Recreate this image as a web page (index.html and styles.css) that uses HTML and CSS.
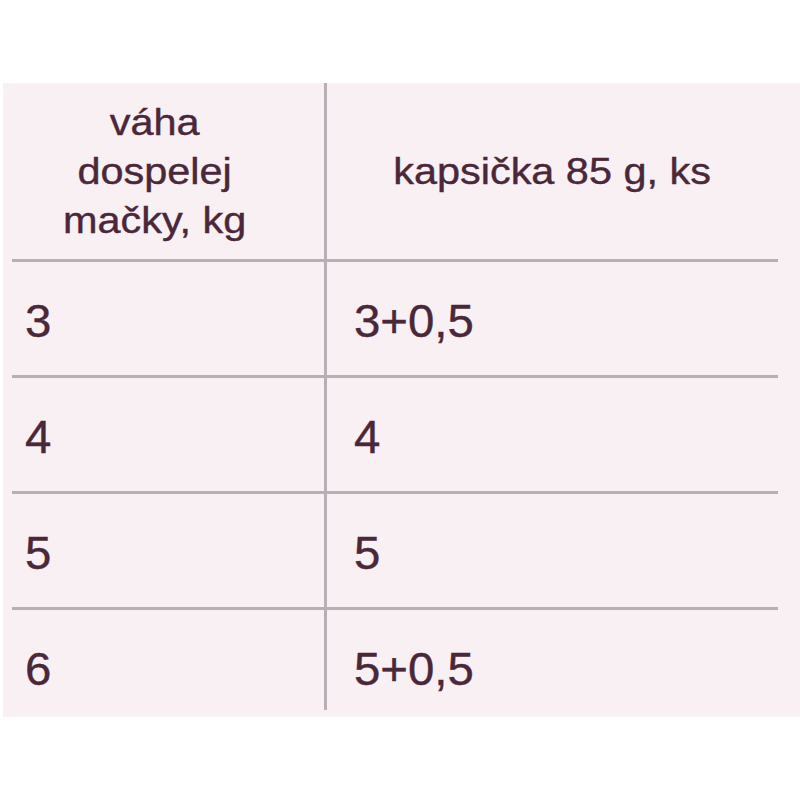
FILE: index.html
```html
<!DOCTYPE html>
<html lang="sk">
<head>
<meta charset="utf-8">
<title>Dávkovanie</title>
<link rel="stylesheet" href="styles.css">
</head>
<body>
<div class="table">
  <div class="row head">
    <div class="cell left"><span class="t ht">váha<br>dospelej<br>mačky, kg</span></div>
    <div class="cell right"><span class="t ht">kapsička 85 g, ks</span></div>
  </div>
  <div class="rule"></div>
  <div class="row">
    <div class="cell left"><span class="t num">3</span></div>
    <div class="cell right"><span class="t num">3+0,5</span></div>
  </div>
  <div class="rule"></div>
  <div class="row">
    <div class="cell left"><span class="t num">4</span></div>
    <div class="cell right"><span class="t num">4</span></div>
  </div>
  <div class="rule"></div>
  <div class="row">
    <div class="cell left"><span class="t num">5</span></div>
    <div class="cell right"><span class="t num">5</span></div>
  </div>
  <div class="rule"></div>
  <div class="row last">
    <div class="cell left"><span class="t num">6</span></div>
    <div class="cell right"><span class="t num">5+0,5</span></div>
  </div>
</div>
</body>
</html>
```

FILE: styles.css
```css
html, body {
  margin: 0;
  padding: 0;
  background: #ffffff;
}
body {
  font-family: "Liberation Sans", Arial, sans-serif;
  color: #4a2739;
}
.table {
  margin: 83px 0 0 3px;
  width: 797px;
  background: #f9f0f3;
}
.row {
  display: flex;
  height: 113px;
}
.row.head {
  height: 176px;
}
.row.last {
  height: 107px;
}
.cell {
  display: flex;
  align-items: center;
  box-sizing: border-box;
}
.cell.left {
  width: 324px;
  border-right: 3px solid #b9adb6;
  padding-left: 22px;
}
.cell.right {
  flex: 1;
  padding-left: 27px;
}
.row .cell {
  padding-top: 5px;
}
.row.last .cell {
  height: 100px;
  align-self: flex-start;
  padding-top: 18px;
}
.head .cell {
  justify-content: center;
  text-align: center;
  padding-top: 0;
}
.head .cell.left {
  padding-left: 0;
  padding-right: 18px;
}
.head .cell.right {
  padding-left: 0;
  padding-right: 22px;
}
.t {
  display: inline-block;
  -webkit-text-stroke: 0.4px #4a2739;
}
.ht {
  font-size: 36px;
  line-height: 49px;
  transform: scaleX(1.15);
  transform-origin: center;
}
.num {
  font-size: 46px;
  line-height: 50px;
  transform: scaleX(1.03);
  transform-origin: left center;
}
.rule {
  height: 3px;
  margin: 0 22px 0 9px;
  background: #b9adb6;
}
```
